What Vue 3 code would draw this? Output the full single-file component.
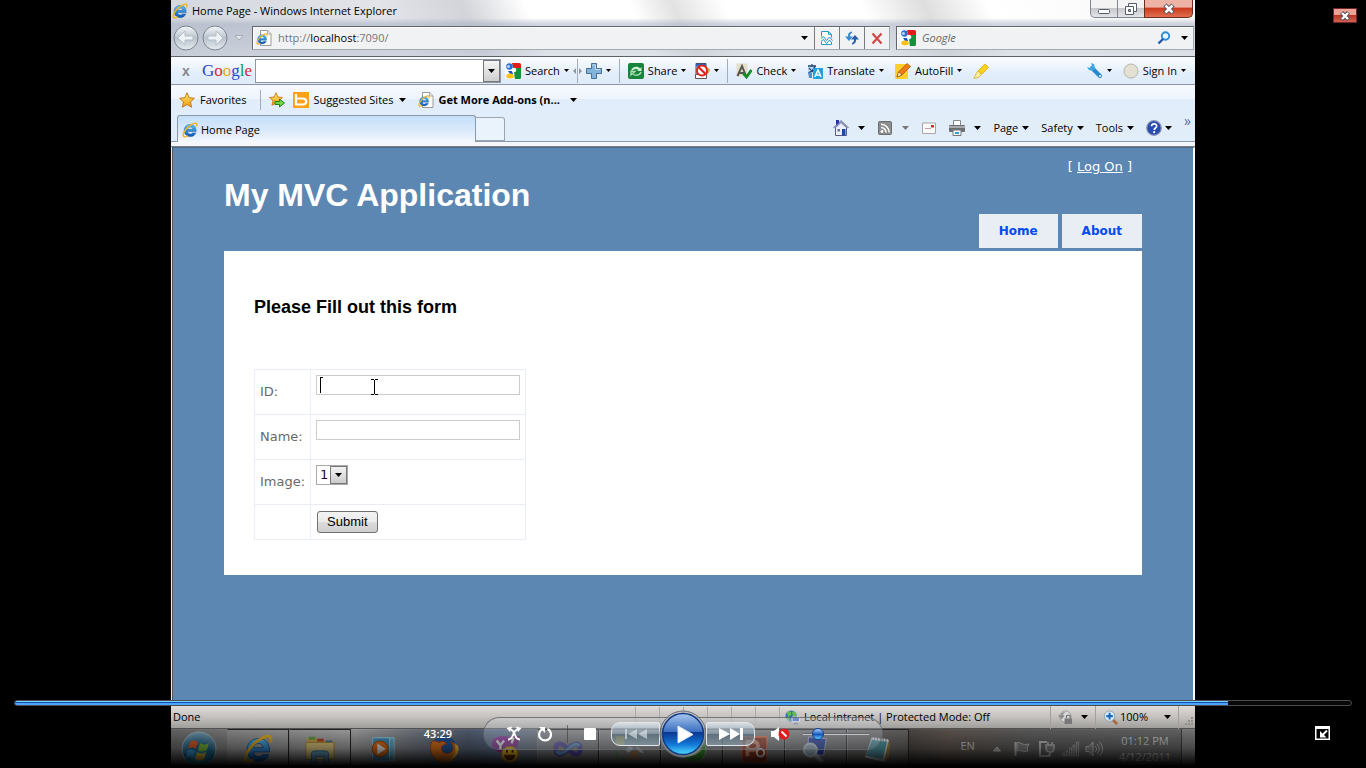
<script setup>
import { ref } from 'vue'

const position = ref(908)
const volume = ref(16)
const id = ref('')
const name = ref('')
const image = ref('1')
const address = ref('http://localhost:7090/')
const tasks = [
  { icon: 'ie', label: 'Internet Explorer', open: true },
  { icon: 'folder', label: 'Windows Explorer', open: true },
  { icon: 'wmp', label: 'Media Player', open: false },
  { icon: 'fox', label: 'Firefox', open: false },
  { icon: 'yahoo', label: 'Messenger', open: false },
  { icon: 'vs', label: 'Visual Studio', open: true },
  { icon: 'tools', label: 'Server tools', open: true },
  { icon: 'green', label: 'Tasks', open: true },
  { icon: 'ppt', label: 'PowerPoint', open: true },
  { icon: 'magnify', label: 'Magnifier', open: true },
  { icon: 'note', label: 'Notepad', open: true }
]
</script>

<template>
  <div class="player">
    <svg class="defs" aria-hidden="true">
      <defs>
        <linearGradient id="gBlue" x1="0" y1="0" x2="0" y2="1"><stop offset="0" stop-color="#5cc3f5" /><stop offset="1" stop-color="#0b57b5" /></linearGradient>
        <linearGradient id="gGold" x1="0" y1="0" x2="0" y2="1"><stop offset="0" stop-color="#ffe66b" /><stop offset="1" stop-color="#f09a12" /></linearGradient>
        <linearGradient id="gDisc" x1="0" y1="0" x2="0" y2="1"><stop offset="0" stop-color="#f4f7fa" /><stop offset=".5" stop-color="#b9c3cc" /><stop offset="1" stop-color="#e6ecf1" /></linearGradient>
        <radialGradient id="gOrb" cx=".5" cy=".9" r=".9"><stop offset="0" stop-color="#37c6ee" /><stop offset=".5" stop-color="#17658e" /><stop offset="1" stop-color="#7fa5bb" /></radialGradient>
        <linearGradient id="gPlay" x1="0" y1="0" x2="0" y2="1"><stop offset="0" stop-color="#a9c8ee" /><stop offset=".44" stop-color="#3b6fc0" /><stop offset=".46" stop-color="#0b3791" /><stop offset=".75" stop-color="#1277d6" /><stop offset="1" stop-color="#4ddcff" /></linearGradient>
      </defs>
      <symbol id="ie" viewBox="0 0 16 16">
        <path d="M14.2 9.6H5.6c.1 1.5 1.2 2.4 2.6 2.4 1 0 1.8-.4 2.2-1.100h3.400c-.8 2.300-2.900 3.700-5.600 3.700-3.600 0-6.100-2.400-6.100-6 0-3.700 2.600-6.200 6.200-6.200 3.800 0 6 2.600 5.900 7.200zM5.600 7.300h5.200c-.1-1.400-1.100-2.300-2.500-2.300-1.500 0-2.500.9-2.700 2.300z" fill="url(#gBlue)" stroke="#0a4f9c" stroke-width=".4" />
        <path d="M14.600 4.500c.6-1.700.4-2.900-.6-3.200C11.800.7 7 3.500 4 7.300 1.300 10.700.400 14 1.900 14.700c.8.400 2.200 0 3.700-1" fill="none" stroke="#efb622" stroke-width="1.500" />
      </symbol>
      <symbol id="iepage" viewBox="0 0 16 16">
        <path d="M4.500.5h7.300L15 3.700v11.800H4.500z" fill="#fff" stroke="#9a9a9a" />
        <path d="M11.500.5V4H15" fill="#e6e6e6" stroke="#9a9a9a" stroke-width=".8" />
        <use href="#ie" x="0" y="3" width="12" height="12" />
      </symbol>
      <symbol id="google" viewBox="0 0 16 16">
        <path d="M0 0h16v16H0z" fill="#fff" /><path d="M7 0h7.500a1.500 1.500 0 0 1 1.500 1.500V5H8z" fill="#e31b1b" />
        <path d="M10 5h6v9.500a1.500 1.500 0 0 1-1.500 1.500H10c-1-2 0-4-1-6z" fill="#14913a" />
        <circle cx="4.500" cy="3.500" r="3.300" fill="#2b6fd4" /><circle cx="3.500" cy="3.500" r="1.500" fill="#bcd6fa" />
        <path d="M3 8h4l1 3H5z" fill="#1c56c2" /><ellipse cx="5" cy="13" rx="3.800" ry="2.500" fill="#fbc21c" />
        <circle cx="9" cy="7" r="2.300" fill="#fff" />
      </symbol>
      <symbol id="down" viewBox="0 0 7 4"><path d="M0 0h7L3.500 4z" fill="currentColor" /></symbol>
      <symbol id="star" viewBox="0 0 16 16"><path d="M8 .8l2.200 4.900 5.200.6-3.900 3.600 1.100 5.300L8 12.500l-4.600 2.700 1.100-5.300L.6 6.300l5.200-.6z" fill="url(#gGold)" stroke="#c37a16" /></symbol>
      <symbol id="staradd" viewBox="0 0 16 16"><use href="#star" x="0" y="0" width="14" height="14" /><path d="M6 9.500h4.500V7.200L15.500 11l-5 4v-2.500H6z" fill="#73d34b" stroke="#268018" /></symbol>
      <symbol id="bing" viewBox="0 0 16 16"><path d="M0 0h16v16H0z" fill="#fba11b" /><path d="M3 2v10.500h6.500c5 0 5-6 0-6H4" fill="none" stroke="#fff" stroke-width="2.200" /></symbol>
      <symbol id="plus" viewBox="0 0 16 16"><path d="M5.500.5h5v5h5v5h-5v5h-5v-5h-5v-5h5z" fill="#82b3db" stroke="#476f96" /><path d="M6.500 2h3v4.500H14" fill="none" stroke="#c3dcf0" /></symbol>
      <symbol id="share" viewBox="0 0 16 16"><rect width="16" height="16" rx="2" fill="#17843c" /><path d="M3 7.500c1-4 7-5 9-2l1.500-1.500v4H9l1.500-1C8.500 5.500 6 6 5 7.500z" fill="#d2f1d6" /><path d="M13 9c-1 4-7 4-8.500 1.500L3 12V8.500h4L5.500 10" fill="none" stroke="#a8ddb2" stroke-width="1.300" /></symbol>
      <symbol id="block" viewBox="0 0 16 16"><path d="M2 .5h10v11H2z" fill="#dce9fa" stroke="#3c4e76" /><path d="M2 1h10v2.500H2z" fill="#2e63bf" /><path d="M1.500 11.500h11v4h-11z" fill="#fff" stroke="#555" /><path d="M13 5l2.500 2-2.500 4" fill="none" stroke="#d4a236" stroke-width="1.500" /><circle cx="8" cy="7.500" r="5" fill="#fff" stroke="#e32020" stroke-width="2" /><path d="M4.500 4l7 7" stroke="#e32020" stroke-width="2.200" /></symbol>
      <symbol id="check" viewBox="0 0 16 16"><path d="M.5.500h11v13H.5z" fill="#e3dfc9" /><path d="M1.500 13L6 3l4 10M3 10h6" fill="none" stroke="#565656" stroke-width="2" /><path d="M7.500 10.500l3 3.500 5-7" fill="none" stroke="#148c2a" stroke-width="2.800" /></symbol>
      <symbol id="translate" viewBox="0 0 16 16"><path d="M1 2h8v8H1z" fill="#b8d3f0" /><path d="M1 3h8M5 1v2M8 3c-1 4-4 6-7 7M2 5c2 3 5 4 6 5" fill="none" stroke="#2b496f" stroke-width="1.300" /><path d="M1 9l4 1v5H2z" fill="#4b8fd0" /><rect x="6" y="5" width="10" height="11" rx="1" fill="#22a1de" /><path d="M7.800 14l3.200-7 3 7M9 12h4" fill="none" stroke="#fff" stroke-width="1.500" /></symbol>
      <symbol id="fill" viewBox="0 0 16 16"><rect y="1" width="13" height="15" rx="1" fill="#ffcf2d" /><path d="M2 14l1.500-5L12 .5l3.500 3L7 12z" fill="#ef7d17" stroke="#9d4b12" stroke-width=".7" /><path d="M2 14l1.500-5L7 12z" fill="#ffe9b2" stroke="#7b3f10" stroke-width=".5" /></symbol>
      <symbol id="marker" viewBox="0 0 16 16"><path d="M5 8l7-7 3.500 3.500-7 7z" fill="#ffd21a" stroke="#d3a00e" stroke-width=".7" /><path d="M5 8l3.500 3.500L6 14l-5 1.500L3 11z" fill="#fff0a0" stroke="#d3a00e" stroke-width=".7" /></symbol>
      <symbol id="wrench" viewBox="0 0 16 16"><path d="M5 5l8 8" stroke="#2986cf" stroke-width="4" stroke-linecap="round" /><path d="M0 4l2 3 4 1 2-3-1-4-3-1 1 3-2 2z" fill="#3ea6e6" /><circle cx="13" cy="13" r="1" fill="#fff" /></symbol>
      <symbol id="home" viewBox="0 0 16 16"><path d="M2.500 7.500L8 2.500l5.500 5v8h-11z" fill="#e9eefa" stroke="#555f86" /><path d="M.5 8L8 1l7.500 7" fill="none" stroke="#8690af" stroke-width="1.400" /><path d="M3 0h3v3L3 5z" fill="#2835a8" /><path d="M9 9h3.500v6.500H9z" fill="#184b9b" /><path d="M4.500 9H7v2.500H4.500z" fill="#68758f" /></symbol>
      <symbol id="rss" viewBox="0 0 16 16"><rect x="1.500" y="1.500" width="13" height="13" rx="1" fill="#8d8d8d" stroke="#6d6d6d" /><circle cx="5" cy="11.500" r="1.400" fill="#fff" /><path d="M4 7.500a5 5 0 0 1 5 5M4 4.300a8.300 8.300 0 0 1 8.200 8.200" fill="none" stroke="#fff" stroke-width="1.500" /></symbol>
      <symbol id="mail" viewBox="0 0 16 16"><path d="M1.500 3h13v10.500h-13z" fill="#fafafa" stroke="#a6a6a6" /><path d="M10 5h3v2.500h-3z" fill="#df2424" /><path d="M4 8.500h6" stroke="#c9a0a0" /></symbol>
      <symbol id="print" viewBox="0 0 16 16"><path d="M4.500.5h7V6h-7z" fill="#fff" stroke="#888" /><rect y="5" width="16" height="7" rx="1" fill="#6b6f74" /><path d="M0 6h16v2H0z" fill="#a7abb0" /><path d="M4 10h8v5.500H4z" fill="#f7fbff" stroke="#777" /><path d="M6 13h4" stroke="#2ca3d9" stroke-width="2" /></symbol>
      <symbol id="help" viewBox="0 0 16 16"><circle cx="8" cy="8" r="7.300" fill="#274bb1" stroke="#8a98b8" stroke-width="1.300" /><path d="M5.500 6.300c0-3.300 5.200-3.300 5.200-.3C10.700 8 8.200 8 8.200 10" fill="none" stroke="#fff" stroke-width="1.700" /><circle cx="8.200" cy="12.200" r="1.100" fill="#fff" /></symbol>
      <symbol id="compat" viewBox="0 0 16 16"><path d="M2.500 6.500v-5h7l3 3v3M2.500 12v2.500h10V12M9.500 1.500v3h3" fill="#fff" stroke="#2798c7" /><path d="M2 8.500l2.500-2 3 4 3-3.500 3 3.500M2 11.500l2.500-2 3 4 3-3.500 2 2.500" fill="none" stroke="#2798c7" /></symbol>
      <symbol id="refresh" viewBox="0 0 16 16"><path d="M8 1.500C4.500 2 4 4 4 6.500H1L5 11l4-4.500H6c0-2 .5-3 2-3.500z" fill="#3a8ad0" /><path d="M8 14.500c3.500-.5 4-2.500 4-5h3L11 5 7 9.500h3c0 2-.5 3-2 3.500z" fill="#245fae" /></symbol>
      <symbol id="stopx" viewBox="0 0 16 16"><path d="M3.500 3.500l9 10M12.500 3.500l-9 10" stroke="#d24848" stroke-width="2.200" /></symbol>
      <symbol id="find" viewBox="0 0 16 16"><circle cx="9.500" cy="6" r="3.700" fill="#eaf6ff" stroke="#2f8bd4" stroke-width="1.900" /><path d="M7 9l-4.500 4.500" stroke="#2458ac" stroke-width="2.400" /></symbol>
      <symbol id="zoomin" viewBox="0 0 16 16"><path d="M10 10l5 5" stroke="#a66b3d" stroke-width="3" /><circle cx="7" cy="6.500" r="5.500" fill="#dceefa" stroke="#8b9eb2" /><path d="M7 3v7M3.500 6.500h7" stroke="#1b69bb" stroke-width="2.200" /></symbol>
      <symbol id="globe" viewBox="0 0 16 16"><circle cx="6.500" cy="6.500" r="6" fill="#2a73b9" /><path d="M2 3c3-3 5 0 4 2S2 7 2 9 6 11 5 12M8 2l3 1 1 3-3 1z" fill="#69bc4b" stroke="#69bc4b" /><path d="M7.500 7.500h8v5h-8z" fill="#4667c2" stroke="#dce2ee" /><path d="M9 14.500h5" stroke="#7c8490" stroke-width="2" /></symbol>
      <symbol id="lock" viewBox="0 0 16 16"><circle cx="8" cy="7" r="6" fill="#d9d9d9" stroke="#999" /><path d="M8 2C5 2 4 3 3 5L0 6l4 4 3-4-2-1" fill="#8d8d8d" /><path d="M7 9h8v6H7z" fill="#777" /><path d="M9 9V7c0-2 4-2 4 0v2" fill="none" stroke="#777" stroke-width="1.500" /></symbol>
      <symbol id="folder" viewBox="0 0 32 32"><path d="M2 4h10l2 3h16v20H2z" fill="#d9b550" /><path d="M4 3h7v3H4z" fill="#62a94a" /><path d="M13 5h7v3h-7z" fill="#c8452f" /><path d="M22 7h7v3h-7z" fill="#3f78c3" /><path d="M1 9h30v18H1z" fill="#efd98a" stroke="#b9923c" /><path d="M7 30V21c0-2 1-3 3-3h12c2 0 3 1 3 3v9h-5v-6h-8v6z" fill="#6daed2" stroke="#39779e" /></symbol>
      <symbol id="wmp" viewBox="0 0 32 32"><path d="M10 4h19v24H10z" fill="#69b8d9" stroke="#a7dff2" /><path d="M6 4h18v25H6z" fill="#4a9cc5" stroke="#a7dff2" /><circle cx="14" cy="16" r="8.500" fill="#f07516" stroke="#a54607" /><path d="M11 10l9 6-9 6z" fill="#fff" /></symbol>
      <symbol id="fox" viewBox="0 0 32 32"><circle cx="16" cy="16" r="14" fill="#225da8" /><path d="M3 8c3-1 5 0 8 1 3-2 6-1 8 2-4 0-6 2-6 5 2 6 9 6 12 2 2-4 0-7-2-10 5 2 8 7 7 13-2 7-8 11-15 10C4 29-1 17 3 8z" fill="#ee7b1c" stroke="#b34710" /><path d="M27 9c3 7 1 14-5 18 7-1 11-8 9-14z" fill="#ffc83b" /></symbol>
      <symbol id="yahoo" viewBox="0 0 32 32"><ellipse cx="13" cy="11" rx="12" ry="9" fill="#94289c" /><path d="M20 2h11l-3 12h-9z" fill="#94289c" /><path d="M6 7l4 5 4-5M10 12v5M24 4l-2 6M21 14h1" fill="none" stroke="#fff" stroke-width="2.500" /><circle cx="20" cy="22" r="9" fill="#ffc31d" stroke="#a76d09" /><path d="M14 22h12c-1 8-11 8-12 0z" fill="#6b2e0a" /><path d="M17 17v3M23 17v3" stroke="#4d2907" stroke-width="2" /></symbol>
      <symbol id="vs" viewBox="0 0 32 32"><path d="M16 16C9 8 3 9 3 16s6 8 13 0 13-7 13 0-6 8-13 0z" fill="none" stroke="#5b4fb0" stroke-width="5" /><path d="M4 18c2 5 7 3 12-2s10-7 12-3" fill="none" stroke="#66a7d9" stroke-width="3" /></symbol>
      <symbol id="tools" viewBox="0 0 32 32"><path d="M1 2h9v10H1z" fill="#e1bc44" /><path d="M14 3h12v10M2 16v11h10" fill="none" stroke="#3c9a44" stroke-width="1.500" stroke-dasharray="2 2" /><path d="M13 15l14 14M27 15L13 29" stroke="#b68047" stroke-width="2.500" /><path d="M11 17l5-4 4 3-6 4zM22 13l6 3 3 5-5-2z" fill="#c5d0d8" /></symbol>
      <symbol id="green" viewBox="0 0 32 32"><circle cx="18" cy="17" r="13" fill="#3c9d31" stroke="#94ca84" /><path d="M10 19c5 4 10 4 15-3" fill="none" stroke="#c7edaf" stroke-width="3" /></symbol>
      <symbol id="ppt" viewBox="0 0 32 32"><path d="M3 3h27v27H3z" fill="#9c3c22" stroke="#e57149" stroke-width="2" /><path d="M9 24V8h6c7 0 7 9 0 9H9" fill="none" stroke="#f0a486" stroke-width="4" /><circle cx="23" cy="20" r="4" fill="none" stroke="#fff" stroke-width="2" /></symbol>
      <symbol id="magnify" viewBox="0 0 32 32"><path d="M8 3l19 2-3 18-17-2z" fill="#2a45b0" stroke="#b5c8f0" /><circle cx="10" cy="17" r="7" fill="#abc3d8" stroke="#dce8ef" stroke-width="2" /><path d="M15 22l8 8" stroke="#c5ccd3" stroke-width="4" /></symbol>
      <symbol id="note" viewBox="0 0 32 32"><path d="M9 4l19 3-4 23-22-5z" fill="#e2edf0" /><path d="M10 5l16 2-5 20-18-4z" fill="#5dabb9" /><path d="M27 8l2 2-2 20-4-2z" fill="#a98a47" /><path d="M10 5l17 2" stroke="#fff" stroke-width="3" stroke-dasharray="2 1" /></symbol>
    </svg>

    <div class="screen">
      <header class="glass">
        <div class="title-row">
          <svg class="ic"><use href="#ie" /></svg>
          <span class="window-title">Home Page - Windows Internet Explorer</span>
          <div class="window-buttons">
            <button class="wb" aria-label="Minimize"><svg viewBox="0 0 14 14" class="glyph"><rect x="1.500" y="7.500" width="11" height="4" rx="1" fill="#fff" stroke="#555c6b" /></svg></button>
            <button class="wb" aria-label="Restore"><svg viewBox="0 0 14 14" class="glyph"><path d="M4.500 1.500h8v8h-8z" fill="#fff" stroke="#555c6b" /><path d="M1.500 4.500h8v8h-8z" fill="#fff" stroke="#555c6b" /><path d="M4.500 7.500h2v2h-2z" fill="#aaa" stroke="#555c6b" /></svg></button>
            <button class="wb wb-close" aria-label="Close"><svg viewBox="0 0 14 14" class="glyph"><path d="M3 3l8 8M11 3l-8 8" stroke="#50505f" stroke-width="4.500" /><path d="M3.500 3.500l7 7M10.500 3.500l-7 7" stroke="#fff" stroke-width="2.500" /></svg></button>
          </div>
        </div>
        <div class="nav-row">
          <button class="round" aria-label="Back"><svg viewBox="0 0 26 26"><circle cx="13" cy="13" r="12" fill="url(#gDisc)" stroke="#7b858f" /><path d="M12 6l-7 7 7 7v-5h8v-4h-8z" fill="#eef3f7" stroke="#b3bec8" /></svg></button>
          <button class="round" aria-label="Forward"><svg viewBox="0 0 26 26"><circle cx="13" cy="13" r="12" fill="url(#gDisc)" stroke="#7b858f" /><path d="M14 6l7 7-7 7v-5H6v-4h8z" fill="#eef3f7" stroke="#b3bec8" /></svg></button>
          <button class="history" aria-label="Recent pages"><svg viewBox="0 0 10 6"><path d="M1 .5h8L5 5z" fill="#e4e8ec" stroke="#a4acb4" /></svg></button>
          <div class="address">
            <svg class="ic"><use href="#iepage" /></svg>
            <div class="url"><span>http://</span><b>localhost</b><span>:7090/</span><input v-model="address" aria-label="Address" /></div>
            <svg class="dn big"><use href="#down" /></svg>
            <button class="seg" aria-label="Compatibility view"><svg class="ic"><use href="#compat" /></svg></button>
            <button class="seg" aria-label="Refresh"><svg class="ic"><use href="#refresh" /></svg></button>
            <button class="seg" aria-label="Stop"><svg class="ic"><use href="#stopx" /></svg></button>
          </div>
          <div class="search">
            <svg class="ic"><use href="#google" /></svg>
            <input placeholder="Google" aria-label="Search" />
            <svg class="ic"><use href="#find" /></svg>
            <svg class="dn big"><use href="#down" /></svg>
          </div>
        </div>
      </header>

      <div class="gbar">
        <button class="close-bar" aria-label="Close toolbar">x</button>
        <span class="glogo"><i class="b">G</i><i class="r">o</i><i class="y">o</i><i class="b">g</i><i class="g">l</i><i class="r">e</i></span>
        <div class="gbox"><input aria-label="Google search" /><button aria-label="History"><svg class="dn big"><use href="#down" /></svg></button></div>
        <button class="tool"><svg class="ic"><use href="#google" /></svg>Search<svg class="dn"><use href="#down" /></svg></button>
        <span class="sep split"><svg viewBox="0 0 9 6"><path d="M3 0v6L0 3zM6 0v6l3-3z" fill="#8f959e" /></svg></span>
        <button class="tool" aria-label="Add"><svg class="ic"><use href="#plus" /></svg><svg class="dn"><use href="#down" /></svg></button>
        <span class="sep"></span>
        <button class="tool"><svg class="ic"><use href="#share" /></svg>Share<svg class="dn"><use href="#down" /></svg></button>
        <button class="tool" aria-label="Pop-ups"><svg class="ic"><use href="#block" /></svg><svg class="dn wide"><use href="#down" /></svg></button>
        <span class="sep"></span>
        <button class="tool roomy"><svg class="ic"><use href="#check" /></svg>Check<svg class="dn"><use href="#down" /></svg></button>
        <button class="tool roomy"><svg class="ic"><use href="#translate" /></svg>Translate<svg class="dn"><use href="#down" /></svg></button>
        <button class="tool roomy"><svg class="ic"><use href="#fill" /></svg>AutoFill<svg class="dn"><use href="#down" /></svg></button>
        <button class="tool" aria-label="Highlight"><svg class="ic"><use href="#marker" /></svg></button>
        <button class="tool roomy push" aria-label="Options"><svg class="ic"><use href="#wrench" /></svg><svg class="dn"><use href="#down" /></svg></button>
        <button class="tool"><svg class="ic" viewBox="0 0 16 16"><circle cx="8" cy="8" r="7" fill="#e4e0d2" stroke="#b9b5a8" /></svg>Sign In<svg class="dn"><use href="#down" /></svg></button>
      </div>

      <div class="favorites">
        <button class="tool"><svg class="ic"><use href="#star" /></svg>Favorites</button>
        <span class="sep fav-sep"></span>
        <button class="tool" aria-label="Add to favorites"><svg class="ic"><use href="#staradd" /></svg></button>
        <button class="tool"><svg class="ic"><use href="#bing" /></svg>Suggested Sites<svg class="dn big"><use href="#down" /></svg></button>
        <button class="tool addons"><svg class="ic"><use href="#iepage" /></svg><b>Get More Add-ons (n...</b><svg class="dn big"><use href="#down" /></svg></button>
      </div>

      <div class="tabs">
        <button class="tab"><svg class="ic"><use href="#ie" /></svg>Home Page</button>
        <button class="tab-new" aria-label="New tab"></button>
        <div class="commands">
          <button class="tool" aria-label="Home"><svg class="ic"><use href="#home" /></svg><svg class="dn big"><use href="#down" /></svg></button>
          <button class="tool dim" aria-label="Feeds"><svg class="ic"><use href="#rss" /></svg><svg class="dn big"><use href="#down" /></svg></button>
          <button class="tool" aria-label="Mail"><svg class="ic"><use href="#mail" /></svg></button>
          <button class="tool" aria-label="Print"><svg class="ic"><use href="#print" /></svg><svg class="dn big"><use href="#down" /></svg></button>
          <button class="tool word">Page<svg class="dn big"><use href="#down" /></svg></button>
          <button class="tool word">Safety<svg class="dn big"><use href="#down" /></svg></button>
          <button class="tool word">Tools<svg class="dn big"><use href="#down" /></svg></button>
          <button class="tool help" aria-label="Help"><svg class="ic"><use href="#help" /></svg><svg class="dn big"><use href="#down" /></svg></button>
          <span class="more">»</span>
        </div>
      </div>

      <main class="viewport">
        <div class="page">
          <div class="logon">[ <a href="#logon">Log On</a> ]</div>
          <h1>My MVC Application</h1>
          <nav class="menu"><a href="#home">Home</a><a href="#about">About</a></nav>
          <form class="main" @submit.prevent>
            <h2>Please Fill out this form</h2>
            <table>
              <tbody>
                <tr><td><label for="fid">ID:</label></td><td class="field"><input id="fid" v-model="id" />
                  <svg class="text-caret" viewBox="0 0 4 16"><path d="M0 0h1v16H0zM1 0h2v1H1z" /></svg>
                  <svg class="ibeam" viewBox="0 0 7 16"><path d="M0 .5h3M4 .5h3M3.500 1v14M0 15.500h3M4 15.500h3" stroke="#000" /></svg></td></tr>
                <tr><td><label for="fname">Name:</label></td><td class="field"><input id="fname" v-model="name" /></td></tr>
                <tr><td><label for="fimage">Image:</label></td><td class="field"><span class="pick"><select id="fimage" v-model="image"><option>1</option><option>2</option><option>3</option></select><span class="pick-arrow"><svg class="dn big"><use href="#down" /></svg></span></span></td></tr>
                <tr class="last"><td></td><td><button class="submit">Submit</button></td></tr>
              </tbody>
            </table>
          </form>
        </div>
      </main>

      <footer class="status">
        <span class="done">Done</span>
        <span class="panes"><i v-for="n in 7" :key="n"></i></span>
        <span class="zone"><svg class="ic"><use href="#globe" /></svg>Local intranet | Protected Mode: Off</span>
        <button class="tool pane" aria-label="Protected mode"><svg class="ic"><use href="#lock" /></svg><svg class="dn big"><use href="#down" /></svg></button>
        <button class="tool pane zoom"><svg class="ic"><use href="#zoomin" /></svg><span>100%</span><svg class="dn big"><use href="#down" /></svg></button>
        <span class="grip"><svg viewBox="0 0 9 9"><path d="M7 0h2v2H7zM7 3h2v2H7zM7 6h2v2H7zM4 3h2v2H4zM4 6h2v2H4zM1 6h2v2H1z" fill="#8f8d8b" /></svg></span>
      </footer>

      <div class="taskbar">
        <button class="orb" aria-label="Start"><svg viewBox="0 0 36 36"><circle cx="18" cy="18" r="17" fill="url(#gOrb)" stroke="#9fb6c2" /><path d="M9 11c3-2 5-2 8 0l-2 7c-3-2-5-2-8 0z" fill="#e96029" /><path d="M19 12c3 2 5 2 9 0l-2 7c-4 2-6 2-9 0z" fill="#83bd3b" /><path d="M6 20c3-2 5-2 8 0l-2 7c-3-2-5-2-7 0z" fill="#3ba2e6" /><path d="M16 21c3 2 5 2 9 0l-2 7c-4 2-6 2-9 0z" fill="#fbcb3a" /></svg></button>
        <button v-for="t in tasks" :key="t.icon" class="task" :class="{ open: t.open }" :aria-label="t.label"><svg><use :href="'#' + t.icon" /></svg></button>
        <div class="tray">
          <span class="lang">EN</span>
          <svg class="up" viewBox="0 0 8 6"><path d="M.5 5L4 1l3.500 4z" fill="#aaa" stroke="#ddd" /></svg>
          <svg viewBox="0 0 18 18"><path d="M2.500 2v14" stroke="#ccc" stroke-width="2" /><path d="M4 3c4-2 4 3 12 1l-2 4 1 3c-5 2-7-2-11 0z" fill="#888" stroke="#ccc" /></svg>
          <svg viewBox="0 0 18 18"><path d="M10 2H3v14h9v-2" fill="none" stroke="#ccc" stroke-width="2" /><path d="M9 5h8v3c0 3-1 4-3 4h-1c-2 0-4-1-4-4zM11 2v3M15 2v3M13 12v5" fill="#888" stroke="#ccc" stroke-width="1.500" /></svg>
          <svg viewBox="0 0 18 18"><path d="M1.500 13v3h2v-3zM5 11v5h2v-5zM8.500 8v8h2V8zM12 5v11h2V5zM15.500 2v14h2V2z" fill="#777" stroke="#bbb" stroke-width=".7" /></svg>
          <svg viewBox="0 0 18 18"><path d="M1 6.500h3L8 2v14l-4-4.500H1z" fill="#888" stroke="#ccc" /><path d="M10 6c2 2 2 4 0 6M12 4c3 3 3 7 0 10M14.500 2c4 4 4 10 0 14" fill="none" stroke="#ccc" /></svg>
          <div class="clock"><span>01:12 PM</span><span>4/12/2011</span></div>
        </div>
        <span class="show-desktop"></span>
      </div>
    </div>

    <button class="exit" aria-label="Close player"><svg viewBox="0 0 14 14" class="glyph"><path d="M3 3l8 8M11 3l-8 8" stroke="#50505f" stroke-width="5" /><path d="M3.500 3.500l7 7M10.500 3.500l-7 7" stroke="#fff" stroke-width="2.800" /></svg></button>

    <div class="overlay">
      <input class="seek" type="range" min="0" max="1000" v-model="position" aria-label="Seek" :style="{ '--fill': position / 10 + '%' }" />
      <div class="controls">
        <div class="transport">
          <span class="time">43:29</span>
          <div class="side">
            <button class="pc" aria-label="Shuffle"><svg viewBox="0 0 16 16"><path d="M2 13.500c3 0 4-1.500 5-4.500s2-5 4.500-5.500M14 13.500c-3 0-4-1.500-5-4.500S7 4 4.500 3.500" fill="none" stroke="#fff" stroke-width="2" /><path d="M10 .5l5.500 1.500L12 6zM6 .5L.5 2 4 6z" fill="#fff" /></svg></button>
            <button class="pc" aria-label="Repeat"><svg viewBox="0 0 16 16"><path d="M10.500 3a6 6 0 1 1-5.500.3" fill="none" stroke="#fff" stroke-width="2.200" /><path d="M2 1h6v6z" fill="#fff" /></svg></button>
            <span class="bar-line"></span>
            <button class="pc" aria-label="Stop"><svg viewBox="0 0 16 16"><rect x="2" y="2" width="12" height="12" rx="1" fill="#fff" /></svg></button>
          </div>
          <div class="center">
            <button class="skip prev" aria-label="Previous"><svg viewBox="0 0 24 12"><path d="M1 1h2v10H1zM13 1v10L4 6zM23 1v10l-9-5z" fill="#dbe5e8" opacity=".65" /></svg></button>
            <button class="play" aria-label="Play"><svg viewBox="0 0 48 48"><circle cx="24" cy="24" r="23" fill="#a9b0b8" fill-opacity=".5" stroke="#6b6f77" /><circle cx="24" cy="24" r="20.500" fill="url(#gPlay)" stroke="#123a86" stroke-width="1.500" /><path d="M19 16l15 8.500L19 33z" fill="#fff" stroke="#dfe7f2" /></svg></button>
            <button class="skip next" aria-label="Next"><svg viewBox="0 0 24 12"><path d="M0 0l11 6-11 6zM11 0l10 6-10 6zM21 0h3v12h-3z" fill="#fff" /></svg></button>
          </div>
          <div class="side">
            <button class="mute" aria-label="Mute"><svg viewBox="0 0 19 14"><path d="M0 4h3l5-4v14l-5-4H0z" fill="#fff" /><circle cx="13" cy="7" r="5.500" fill="#e01c1c" /><path d="M10.500 4.500l5 5" stroke="#fff" stroke-width="1.800" /></svg></button>
            <input class="volume" type="range" min="0" max="100" v-model="volume" aria-label="Volume" />
          </div>
        </div>
        <button class="window-mode" aria-label="Exit full screen"><svg viewBox="0 0 15 14"><path d="M0 0h15v14H0z" fill="#fff" /><path d="M1.500 3h12v9.500h-12z" fill="#000" /><path d="M12 4.500L7 9.500" stroke="#fff" stroke-width="2" /><path d="M5 5v6.500h6.500z" fill="#fff" /></svg></button>
      </div>
    </div>
  </div>
</template>

<style>
html, body { background: #000; }
</style>

<style scoped>
* { box-sizing: border-box; }
button { font: inherit; color: inherit; background: none; border: 0; padding: 0; margin: 0; display: flex; align-items: center; justify-content: center; }
input { font: inherit; margin: 0; outline: 0; min-width: 0; }
svg { display: block; flex: none; }
.defs { position: absolute; width: 0; height: 0; }
.player { position: relative; min-height: 100vh; background: #000; display: flex; justify-content: center; overflow: hidden; font: 11px/16px "Open Sans", "Noto Sans", sans-serif; color: #000; }
.screen { min-height: 100vh; aspect-ratio: 4 / 3; display: flex; flex-direction: column; background: #e2edfa; }
.ic { width: 16px; height: 16px; }
.dn { width: 5px; height: 3px; }
.dn.big { width: 7px; height: 4px; }
.glyph { width: 14px; height: 14px; }

.glass { height: 57px; border-bottom: 1px solid #5e6068; background: linear-gradient(180deg, transparent 0, transparent 18px, rgba(160, 170, 190, .5) 24px, rgba(190, 198, 212, .5) 100%), linear-gradient(65deg, #d3d6dd 0, #e2e4e9 22%, #d2d4d9 30%, #fff 36%, #fff 46%, #e2e2e2 50%, #fff 55%, #fff 68%, #dedede 74%, #fff 80%, #f7f7f7 100%); }
.title-row { height: 24px; display: flex; align-items: flex-start; padding: 3px 2px 0 1px; }
.window-title { padding-left: 4px; flex: 1; }
.window-buttons { display: flex; margin-top: -3px; }
.wb { width: 28px; height: 18px; border: 1px solid #7f8690; border-top: 0; margin-left: -1px; background: linear-gradient(#f3f3f4 45%, #c6c8cc 50%, #e4e5e8); }
.wb:first-child { border-radius: 0 0 0 5px; }
.wb-close { width: 49px; border-color: #6d2b22; border-radius: 0 0 5px 0; background: linear-gradient(#efb3a6 40%, #cc3c1f 50%, #e07050); }
.nav-row { height: 28px; display: flex; align-items: center; padding: 0 1px 0 2px; }
.round { width: 26px; height: 26px; margin-right: 3px; }
.round svg { width: 26px; height: 26px; }
.history { width: 16px; margin-right: 5px; }
.history svg { width: 10px; height: 6px; }
.address, .search { height: 24px; border: 1px solid #62666c; border-bottom-color: #a5a8ae; border-right-color: #a5a8ae; background: #f1f2f4; display: flex; align-items: center; box-shadow: inset 1px 1px 0 #fff; }
.address { flex: 1; padding-left: 3px; }
.url { flex: 1; position: relative; padding-left: 6px; color: #777; }
.url b { font-weight: 400; color: #000; }
.url input { position: absolute; inset: 0; width: 100%; border: 0; background: none; color: transparent; padding: 0 0 0 6px; }
.address > .dn { margin-right: 6px; }
.seg { width: 25px; height: 22px; border-left: 1px solid #777b82; }
.search { width: 298px; margin-left: 6px; padding: 0 5px 0 3px; }
.search input { flex: 1; border: 0; background: none; padding: 0 4px 0 6px; font-style: italic; }
.search input::placeholder { color: #666; opacity: 1; }
.search .dn { margin-left: 9px; }

.gbar { height: 28px; display: flex; align-items: center; padding: 0 9px 0 7px; background: linear-gradient(#fbfdff, #e3eefb 60%, #e0ebfa); border-bottom: 1px solid #8b95a5; }
.tool { gap: 4px; height: 24px; white-space: nowrap; }
.close-bar { width: 16px; font: bold 14px/16px "Liberation Sans", sans-serif; color: #888; }
.glogo { margin-left: 8px; width: 47px; font: 17px/20px "Liberation Serif", serif; white-space: nowrap; }
.glogo i { font-style: normal; }
.b { color: #1f49c9; } .r { color: #d42a2a; } .y { color: #e5ab10; } .g { color: #179a35; }
.gbox { display: flex; width: 246px; height: 24px; margin: 0 4px 0 6px; border: 1px solid #8f98a6; background: #fff; }
.gbox input { flex: 1; border: 0; background: none; }
.gbox button { width: 17px; border: 1px solid #777; background: linear-gradient(#f5f5f5, #cfcfcf); }
.gbar .tool { margin-right: 8px; }
.gbar .roomy { margin-right: 11px; }
.gbar .tool:last-child { margin-right: 0; }
.sep { width: 1px; height: 24px; background: #a5acb7; margin-right: 8px; }
.split { position: relative; }
.split svg { position: absolute; left: -4px; top: 9px; width: 9px; height: 6px; }
.gbar .push { margin-left: auto; }

.favorites { height: 30px; display: flex; align-items: center; gap: 8px; padding: 0 8px; background: linear-gradient(#f6f9fe, #eff4fd 45%, #e1edfa 46%); }
.favorites .tool { gap: 5px; }
.fav-sep { margin: 0 0 0 5px; height: 20px; }
.favorites .addons { margin-left: 4px; }
.addons .dn { margin-left: 5px; }

.tabs { display: flex; align-items: flex-end; height: 32px; padding: 0 4px 4px 6px; border-bottom: 1px solid #7a8087; background: linear-gradient(transparent 26px, #8d9aab 26px, #8d9aab 27px, #f4f8fd 27px); }
.tab { width: 299px; height: 27px; justify-content: flex-start; gap: 3px; padding: 1px 0 0 4px; border: 1px solid #8b98aa; border-bottom: 0; border-radius: 3px 3px 0 0; background: linear-gradient(#c5dffa, #dceafb 60%, #f4f8fd); }
.tab-new { width: 29px; height: 24px; margin-bottom: 1px; border: 1px solid #9aa6b5; border-left: 0; border-radius: 0 3px 0 0; background: #eaf2fc; }
.commands { margin-left: auto; display: flex; align-items: center; gap: 12px; height: 29px; }
.commands .tool { gap: 9px; }
.commands .word { gap: 4px; }
.commands .help { gap: 3px; }
.dim .dn { color: #777; }
.more { color: #5b6ea8; font-size: 14px; align-self: flex-start; }

.viewport { flex: 1; border-left: 1px solid #555; border-right: 2px solid #fff; border-top: 1px solid #4b6580; margin-left: 1px; background: #5c87b2; color: #696969; font: 13px/18px "DejaVu Sans", Verdana, sans-serif; }
.page { width: 90%; margin: 0 auto; }
.logon { text-align: right; padding: 10px 10px 0; color: #fff; }
.logon a { color: #fff; }
h1 { margin: 0; padding: 1px 0; font: bold 32px/36px "Liberation Sans", Arial, sans-serif; color: #fff; }
.menu { display: flex; justify-content: flex-end; gap: 4px; padding-bottom: 3px; }
.menu a { height: 34px; padding: 8px 20px; background: #e8eef4; color: #034af3; font-weight: bold; font-size: 12px; text-decoration: none; }
.main { display: block; background: #fff; padding: 46px 30px 35px; }
h2 { margin: 0 0 51px; font: bold 18px/21px "Liberation Sans", Arial, sans-serif; color: #000; }
table { border-collapse: collapse; border: 1px solid #e8eef4; }
td { border: 1px solid #e8eef4; padding: 5px; height: 45px; }
.last td { height: 35px; }
.field { position: relative; vertical-align: top; }
.field > input { display: block; width: 204px; height: 20px; border: 1px solid #ccc; padding: 0 3px; background: #fff; }
.text-caret { position: absolute; left: 9px; top: 7px; width: 4px; height: 16px; }
.ibeam { position: absolute; left: 60px; top: 9px; width: 7px; height: 16px; }
.pick { position: relative; display: inline-flex; }
select { appearance: none; width: 32px; height: 20px; border: 1px solid #aaa; border-radius: 0; background: #fff; padding: 0 3px; font: 13px/16px "DejaVu Sans", sans-serif; color: #1c0a3c; }
.pick-arrow { position: absolute; right: 1px; top: 1px; bottom: 1px; width: 17px; display: flex; align-items: center; justify-content: center; border: 1px solid #777; background: linear-gradient(#f3f3f3, #ccc); color: #000; pointer-events: none; }
.submit { height: 22px; margin-left: 1px; padding: 0 9px; border: 1px solid #707070; border-radius: 3px; background: linear-gradient(#f3f3f3, #ebebeb 49%, #dcdcdc 50%, #cecece); color: #000; font: 13px/18px "Liberation Sans", Arial, sans-serif; }

.status { height: 23px; display: flex; align-items: center; border-bottom: 1px solid #555; background: linear-gradient(#dedbd8, #c4c1be 50%, #a09e9b); }
.status .ic { width: 15px; height: 15px; }
.done { padding-left: 2px; flex: 1; }
.panes { display: flex; gap: 23px; }
.panes i { width: 1px; height: 20px; background: #aaa7a4; }
.zone { display: flex; align-items: center; gap: 4px; padding-left: 5px; width: 270px; }
.pane { border-left: 1px solid #a29f9c; gap: 8px; width: 45px; }
.zoom { width: 84px; gap: 2px; border-right: 1px solid #a29f9c; }
.zoom .dn { margin-left: 14px; }
.grip { width: 16px; align-self: flex-end; display: flex; justify-content: flex-end; padding: 0 2px 2px 0; }
.grip svg { width: 9px; height: 9px; }

.taskbar { height: 39px; display: flex; align-items: center; background: linear-gradient(90deg, #777 0, #888 5%, #b0b0b0 18%, #7e848e 24%, #5e6a80 29%, #637897 32%, #777 38%, #6f6f6f 60%, #595450 72%, #6d625b 76%, #6a6a6a 84%, #777 100%); }
.orb { width: 56px; }
.orb svg { width: 36px; height: 36px; }
.task { width: 62px; height: 39px; border: 1px solid transparent; }
.task.open { border-color: #292929; border-left-color: #999; background: rgba(235, 235, 235, .18); }
.task svg { width: 30px; height: 30px; }
.tray { margin-left: auto; display: flex; align-items: center; gap: 6px; color: #ddd; }
.tray svg { width: 18px; height: 18px; }
.tray svg.up { width: 8px; height: 6px; margin: 0 6px; }
.lang { padding: 0 6px 6px 0; }
.clock { display: flex; flex-direction: column; text-align: center; margin: 0 10px; }
.show-desktop { width: 14px; height: 39px; border-left: 1px solid #444; background: rgba(255, 255, 255, .15); }

.exit { position: absolute; top: 8px; right: 9px; width: 24px; height: 15px; border: 1px solid #70242c; background: linear-gradient(#eaa394 45%, #b93722 50%, #d06250); }
.exit .glyph { width: 12px; height: 12px; }

.overlay { position: absolute; left: 0; right: 0; bottom: 0; padding: 0 14px; background: linear-gradient(transparent 28px, rgba(0, 0, 0, .2) 30px, rgba(0, 0, 0, .48) 48px, #000 66px); color: #fff; }
.seek { appearance: none; display: block; width: 100%; height: 6px; border: 1px solid #4a4d52; border-radius: 3px; background: linear-gradient(#7cd0ff 0 1px, #0d4fae 1px 2px, #4ea3ff 2px) 0 0 / var(--fill) 100% no-repeat, #080808; }
.seek::-webkit-slider-thumb { appearance: none; width: 1px; height: 1px; background: none; }
.controls { position: relative; display: flex; justify-content: center; height: 62px; padding-top: 11px; }
.transport { position: relative; display: flex; align-items: center; width: 400px; height: 33px; border: 1px solid rgba(90, 93, 98, .75); border-radius: 17px; background: linear-gradient(rgba(225, 228, 235, .3), rgba(160, 168, 180, .22)); }
.time { position: absolute; right: 100%; margin-right: 32px; font-weight: 600; }
.side { flex: 1; display: flex; align-items: center; }
.pc { width: 16px; height: 16px; margin-left: 15px; }
.side .pc:first-child { margin-left: 22px; }
.pc svg { width: 16px; height: 16px; }
.bar-line { width: 1px; height: 18px; margin-left: 14px; background: rgba(60, 60, 65, .6); }
.bar-line + .pc { margin-left: 14px; }
.center { display: flex; align-items: center; width: 144px; height: 33px; }
.skip { flex: 1; height: 24px; border: 1px solid #e0e6ec; background: linear-gradient(rgba(230, 240, 248, .65), rgba(140, 165, 185, .55) 48%, rgba(75, 100, 120, .6) 50%, rgba(150, 180, 195, .5)); }
.skip svg { width: 24px; height: 12px; }
.prev { border-radius: 9px 2px 2px 9px; }
.next { border-radius: 2px 9px 9px 2px; }
.play { width: 46px; height: 48px; }
.play svg { width: 48px; height: 48px; }
.mute { width: 19px; margin-left: 16px; }
.mute svg { width: 19px; height: 14px; }
.volume { appearance: none; width: 66px; height: 12px; margin-left: 13px; background: linear-gradient(transparent 5px, #62656b 5px 6px, #bfc2c7 6px 7px, transparent 7px); }
.volume::-webkit-slider-thumb { appearance: none; width: 12px; height: 12px; border-radius: 50%; border: 1px solid #123f92; background: linear-gradient(#a8d2ff, #1556bb 55%, #5fd0ff); }
.window-mode { position: absolute; right: 22px; top: 20px; width: 15px; height: 14px; }
.window-mode svg { width: 15px; height: 14px; }
</style>
